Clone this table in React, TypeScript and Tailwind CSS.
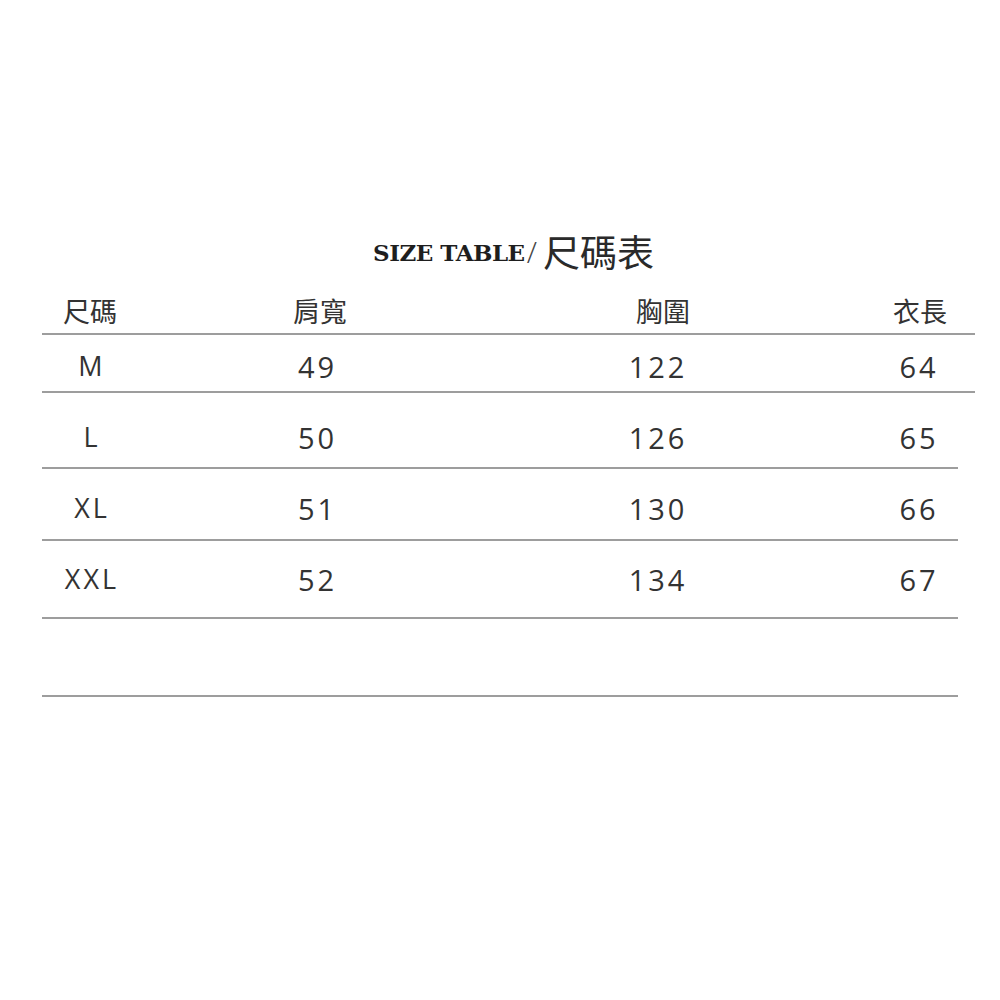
const font = {
  fontFamily: '"Open Sans", "Noto Sans CJK TC", sans-serif',
};

type Row = { size: string; shoulder: string; chest: string; length: string; h: string; pt: string; long?: boolean };

const rows: Row[] = [
  { size: "M", shoulder: "49", chest: "122", length: "64", h: "h-[56px]", pt: "pt-[17px]", long: true },
  { size: "L", shoulder: "50", chest: "126", length: "65", h: "h-[74px]", pt: "pt-[30px]" },
  { size: "XL", shoulder: "51", chest: "130", length: "66", h: "h-[70px]", pt: "pt-[25px]" },
  { size: "XXL", shoulder: "52", chest: "134", length: "67", h: "h-[76px]", pt: "pt-[24px]" },
];

const Line = ({ long }: { long?: boolean }) => (
  <div className={`h-[2px] bg-[#9d9d9d] ${long ? "w-[933px]" : "w-[916px]"}`} />
);

export default function App() {
  return (
    <div className="w-[1000px] h-[1000px] bg-white text-[#333]" style={font}>
      <div className="flex justify-center items-end h-[270px] pl-[27px]">
        <span
          className="text-[23px] font-black tracking-[-0.5px] text-[#1e1e1e] leading-none mb-[6px]"
          style={{ fontFamily: '"DejaVu Serif", "Liberation Serif", serif' }}
        >
          SIZE TABLE
        </span>
        <span className="text-[30px] font-light leading-none text-[#444] ml-[2px] mr-[6px] mb-[3px]">/</span>
        <span
          className="text-[37px] leading-none text-[#2a2a2a]"
          style={{ fontFamily: '"Noto Sans CJK TC", sans-serif' }}
        >
          尺碼表
        </span>
      </div>

      <div className="ml-[42px] flex flex-col">
        <div className="grid grid-cols-[96px_422px_196px_100px_126px] w-[940px] h-[63px] pt-[28px] text-[27px] leading-none text-[#333]">
          <div className="text-center">尺碼</div>
          <div className="pl-[155px]">肩寬</div>
          <div className="text-center pl-[10px]">胸圍</div>
          <div />
          <div className="text-center pl-[2px]">衣長</div>
        </div>
        <Line long />
        {rows.map((r) => (
          <div key={r.size}>
            <div
              className={`grid grid-cols-[96px_422px_196px_100px_126px] w-[940px] ${r.h} ${r.pt} text-[29px] leading-none tracking-[3px]`}
            >
              <div className="text-center tracking-[3px] pl-[4px] text-[27px]">{r.size}</div>
              <div className="pl-[160px]">{r.shoulder}</div>
              <div className="text-center">{r.chest}</div>
              <div />
              <div className="text-center">{r.length}</div>
            </div>
            <Line long={r.long} />
          </div>
        ))}
        <div className="h-[76px]" />
        <Line />
      </div>
    </div>
  );
}
